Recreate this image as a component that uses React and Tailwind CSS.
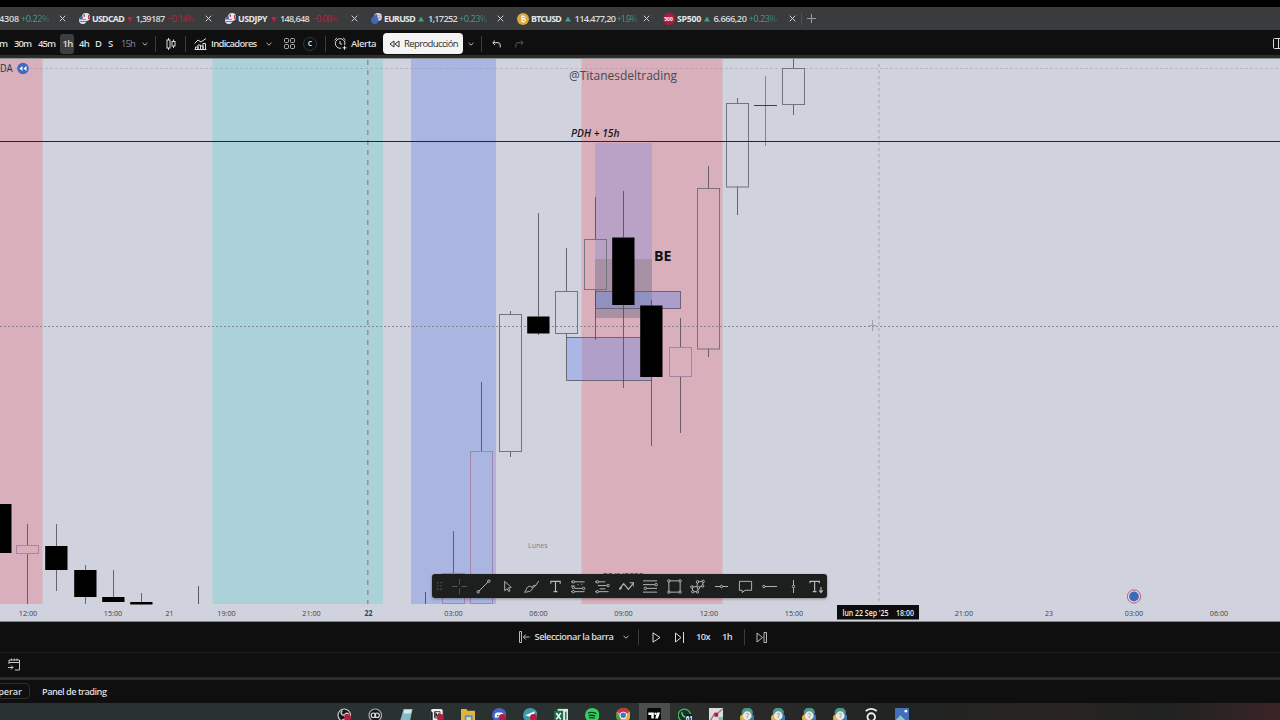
import React, { useLayoutEffect, useRef } from "react";

/* Text that spreads or tightens its letters to fill the width of its box. */
function Fit({ className = "", children }) {
  const box = useRef(null);
  const ink = useRef(null);
  useLayoutEffect(() => {
    const s = ink.current;
    s.style.letterSpacing = "0px";
    const natural = s.getBoundingClientRect().width;
    const wanted = box.current.getBoundingClientRect().width;
    s.style.letterSpacing = `${(wanted - natural) / String(children).length}px`;
  }, [children]);
  return (
    <span ref={box} className={`block shrink-0 whitespace-nowrap ${className}`}>
      <span ref={ink}>{children}</span>
    </span>
  );
}

const Svg = ({ className, box, children, sw = 1 }) => (
  <svg className={`block shrink-0 ${className}`} viewBox={box} fill="none" stroke="currentColor" strokeWidth={sw}>
    {children}
  </svg>
);

const Chevron = ({ className }) => (
  <Svg className={`h-[4px] w-[6px] ${className}`} box="0 0 6 4"><path d="M.5 .8 3 3.2 5.500 .8" /></Svg>
);
const Close = ({ className }) => (
  <Svg className={`h-[7px] w-[7px] text-[#d0d1d3] ${className}`} box="0 0 7 7"><path d="M.7 .7l5.600 5.600M6.300 .7L.7 6.300" /></Svg>
);
const Sep = ({ className }) => <span className={`h-[16px] w-px shrink-0 bg-[#3a3c3d] ${className}`} />;

const UsdPair = () => (
  <Svg className="h-[11px] w-[11px]" box="0 0 11 11" sw="0">
    <circle cx="7" cy="4" r="4" fill="#e8e4ea" />
    <path d="M4.500 1.500h1.500v3H4.500zM9 2h1.500v4H9z" fill="#c43a52" />
    <circle cx="3.800" cy="7.200" r="3.700" fill="#e6e3ee" />
    <path d="M.3 6.500a3.600 3.600 0 0 1 3.500-3v3z" fill="#3e5aa8" />
    <path d="M1 8h6v.9H1zM4 6h3v.8H4z" fill="#d04a60" />
  </Svg>
);
const EurPair = () => (
  <Svg className="h-[11px] w-[11px]" box="0 0 11 11" sw="0">
    <circle cx="7" cy="4" r="4" fill="#dcdbe6" />
    <path d="M3.500 1.500h3v2.500h-3z" fill="#4863b5" />
    <path d="M6.500 4.500h4.300v1H6.500zM7 2.500h3.800v.8H7z" fill="#bd8294" />
    <circle cx="3.800" cy="7.200" r="3.700" fill="#3f68bb" />
  </Svg>
);
const Btc = () => (
  <Svg className="h-[12px] w-[12px]" box="0 0 12 12">
    <circle cx="6" cy="6" r="6" fill="#dba83f" stroke="none" />
    <path d="M4.500 3.300h2.300a1.200 1.200 0 0 1 0 2.500H4.800h2.300a1.400 1.400 0 0 1 0 2.800H4.500M5 3v6M6.200 2.300v1M6.200 8.700v1" stroke="#fff" />
  </Svg>
);
const Sp = () => (
  <span className="flex h-[12px] w-[12px] shrink-0 items-center justify-center rounded-full bg-[#b01a3c] text-[5px] font-bold text-white">500</span>
);
const Tri = ({ down }) => (
  <Svg className="h-[6px] w-[6px]" box="0 0 6 6" sw="0">
    {down ? <path d="M0 1h6L3 6z" fill="#c4213f" /> : <path d="M0 5.500h6L3 .5z" fill="#3aa38b" />}
  </Svg>
);

function Tab({ icon, name, nameW, triM, down, price, priceM, change, changeW, changeM, faded }) {
  return (
    <div className="flex h-full w-[146px] shrink-0 items-center pl-[6.500px]">
      <div className="flex w-[130px] shrink-0 items-center overflow-hidden">
        {icon}
        <Fit className={`ml-[2.500px] text-[8.800px] font-bold text-[#e6e7e9] ${nameW}`}>{name}</Fit>
        <span className={triM}><Tri down={down} /></span>
        <Fit className={`font-semibold text-[#d8d9db] ${priceM}`}>{price}</Fit>
        <span className={`overflow-hidden ${changeM} ${down ? "text-[#d0213f]" : "text-[#42a08c]"} ${faded}`}>
          <Fit className={changeW}>{change}</Fit>
        </span>
      </div>
      <Close className="-ml-[3.500px]" />
    </div>
  );
}

const fade = "[mask-image:linear-gradient(to_right,black_60%,rgba(0,0,0,0.35))]";

function TabBar() {
  return (
    <div className="flex h-[23px] shrink-0 items-center overflow-hidden bg-[#3a3b3c] text-[9.200px] leading-[12px]">
      <div className="flex h-full w-[72px] shrink-0 items-center">
        <Fit className="-ml-[6px] w-[25px] font-semibold text-[#d8d9db]">44308</Fit>
        <Fit className={`ml-[2px] w-[28px] text-[#42a08c] ${fade}`}>+0.22%</Fit>
        <Close className="ml-[10px]" />
      </div>
      <Tab icon={<UsdPair />} name="USDCAD" nameW="w-[32px]" triM="ml-[3px]" down price="1,39187" priceM="ml-[2.500px] w-[29px]" change="−0.14%" changeM="ml-[3px]" changeW="w-[27px]" faded={fade} />
      <Tab icon={<UsdPair />} name="USDJPY" nameW="w-[29px]" triM="ml-[4px]" down price="148,648" priceM="ml-[3px] w-[29px]" change="−0.08%" changeM="ml-[3px]" changeW="w-[27px]" faded={fade} />
      <Tab icon={<EurPair />} name="EURUSD" nameW="w-[31px]" triM="ml-[3px]" price="1,17252" priceM="ml-[4px] w-[29px]" change="+0.23%" changeM="ml-[2px]" changeW="w-[28px]" faded={fade} />
      <Tab icon={<Btc />} name="BTCUSD" nameW="w-[30px]" triM="ml-[3.500px]" price="114.477,20" priceM="ml-[4px] w-[41px]" change="+1.9%" changeM="ml-[1px]" changeW="w-[20px]" faded={fade} />
      <Tab icon={<Sp />} name="SP500" nameW="w-[24px]" triM="ml-[2.500px]" price="6.666,20" priceM="ml-[4px] w-[33px]" change="+0.23%" changeM="ml-[2px]" changeW="w-[28px]" faded={fade} />
      <span className="-ml-px h-[12px] w-px shrink-0 bg-[#505254]" />
      <Svg className="ml-[5px] h-[9px] w-[9px] text-[#9a9c9f]" box="0 0 9 9"><path d="M4.500 0v9M0 4.500h9" /></Svg>
    </div>
  );
}

function MainToolbar() {
  return (
    <div className="flex h-[25px] shrink-0 items-center overflow-hidden bg-[#0f0f0f] pt-[2px] text-[9.500px] font-semibold leading-[14px] text-[#dcdddf]">
      <Fit className="-ml-[10px] w-[17px]">15m</Fit>
      <Fit className="ml-[7px] w-[17px]">30m</Fit>
      <Fit className="ml-[7px] w-[17px]">45m</Fit>
      <span className="ml-[5px] flex h-[20px] w-[14px] shrink-0 items-center rounded-[3px] bg-[#3c3e3f] pl-[2.500px]"><Fit className="w-[10px]">1h</Fit></span>
      <Fit className="ml-[5px] w-[10px]">4h</Fit>
      <Fit className="ml-[6px] w-[7px]">D</Fit>
      <Fit className="ml-[6px] w-[6px]">S</Fit>
      <Fit className="ml-[7px] w-[14px] font-normal text-[#85878a]">15h</Fit>
      <Chevron className="ml-[7px] text-[#b5b7ba]" />
      <Sep className="ml-[7px]" />
      <Svg className="ml-[10px] h-[12px] w-[10px]" box="0 0 10 12">
        <path d="M2.500 0v12M7.500 1.500v8.500" /><rect x="1" y="2" width="3" height="8" fill="#0f0f0f" /><rect x="6" y="3.500" width="3" height="4.500" fill="#0f0f0f" />
      </Svg>
      <Sep className="ml-[9px]" />
      <Svg className="ml-[8px] h-[12px] w-[13px]" box="0 0 13 12">
        <path d="M.5 5.500 4 2l3 2L12 .5M1.500 11.500V9h2.500v2.500M4 11.500V7h2.500v4.500M6.500 11.500V8H9v3.500M9 11.500V5.500h2.500v6M.5 11.500h12" />
      </Svg>
      <Fit className="ml-[4px] w-[45.500px]">Indicadores</Fit>
      <Chevron className="ml-[9.500px] text-[#b5b7ba]" />
      <Svg className="ml-[12px] h-[11px] w-[11px] text-[#b5b7ba]" box="0 0 11 11">
        <rect x=".5" y=".5" width="4" height="4" rx="1" /><rect x="6.500" y=".5" width="4" height="4" rx="1" /><rect x=".5" y="6.500" width="4" height="4" rx="1" /><rect x="6.500" y="6.500" width="4" height="4" rx="1" />
      </Svg>
      <span className="ml-[8px] flex h-[14px] w-[14px] shrink-0 items-center justify-center rounded-full border border-[#343637] text-[7px] font-bold">C</span>
      <Sep className="ml-[8px]" />
      <Svg className="ml-[8px] h-[13px] w-[13px]" box="0 0 13 13">
        <path d="M10.700 8A4.800 4.800 0 1 0 7 11.200M6 4v3h2.200M.6 3.200 3 .8M9.200 .8l2.400 2.400M10.500 8.800v4M8.500 10.800h4" />
      </Svg>
      <Fit className="ml-[4px] w-[25px]">Alerta</Fit>
      <span className="ml-[7px] flex h-[21px] w-[80px] shrink-0 items-center rounded-[4px] bg-[#f4f4f5] font-normal text-[#2c2e31]">
        <Svg className="ml-[5.500px] h-[8px] w-[11px]" box="0 0 11 8"><path d="M5 1v6L1 4zM10 1v6L6 4z" /></Svg>
        <Fit className="ml-[4.500px] w-[54px]">Reproducción</Fit>
      </span>
      <Chevron className="ml-[5px] text-[#b5b7ba]" />
      <Sep className="ml-[7px]" />
      <Svg className="ml-[9.500px] h-[8px] w-[9px]" box="0 0 9 8"><path d="M3 .5 .8 2.700 3 5M1 2.700h5A2.200 2.200 0 0 1 8.200 5v2.500" /></Svg>
      <Svg className="ml-[14.500px] h-[8px] w-[9px] text-[#55585b]" box="0 0 9 8"><path d="M6 .5l2.200 2.200L6 5M8 2.700H3A2.200 2.200 0 0 0 .8 5v2.500" /></Svg>
      <Svg className="ml-auto h-[11px] w-[7px]" box="0 0 7 11"><rect x=".5" y=".5" width="12" height="10" rx="1" /><path d="M5.500 0v11" /></Svg>
    </div>
  );
}

/* x centre, high, body top, body bottom, low, solid */
const candles = [
  [0, 504, 504, 553, 553, 1],
  [27, 524, 545, 553, 604, 0],
  [56, 524, 546, 570, 591, 1],
  [85, 565, 570, 597, 604, 1],
  [113, 570, 597, 602, 602, 1],
  [141, 593, 602, 604.500, 604, 1],
  [453, 531, 573, 603, 604, 0],
  [481, 382, 451, 603, 604, 0],
  [510, 311, 314, 451, 457, 0],
  [538, 213, 316.500, 333.500, 335, 1],
  [566, 248, 291, 333, 338, 0],
  [595, 197, 239, 289, 340, 0],
  [623, 191, 237.500, 305, 388, 1],
  [651, 300, 305.500, 377, 446, 1],
  [680, 318, 347, 376, 433, 0],
  [708, 166, 188, 348.500, 357, 0],
  [737, 98, 103, 186.500, 215, 0],
  [793, 59, 68, 104, 115, 0],
];

/* candles that pink or blue bands tint */
const tinted = [27, 453, 481, 680];

function Candle({ c }) {
  const [x, hi, top, bot, low, solid] = c;
  return (
    <g>
      <path d={`M${x + 0.5} ${hi}V${top}M${x + 0.5} ${bot}V${low}`} stroke="#4a4a54" strokeOpacity=".8" />
      {solid ? (
        <rect x={x - 10.800} y={top} width="22.300" height={bot - top} fill="#000" />
      ) : (
        <rect x={x - 10.500} y={top + 0.5} width="22" height={bot - top} fill="none" stroke={tinted.includes(x) ? "#a585a2" : "#75737e"} />
      )}
    </g>
  );
}

const hours = [
  [28, "12:00"], [113, "15:00"], [169.500, "21"], [226.500, "19:00"], [311.500, "21:00"], [368.500, "22"], [453.500, "03:00"], [538.500, "06:00"],
  [623.500, "09:00"], [708.900, "12:00"], [794, "15:00"], [963.900, "21:00"], [1048.900, "23"], [1134, "03:00"], [1219, "06:00"],
];

function Chart() {
  return (
    <svg className="block h-[563px] w-[1280px]" viewBox="0 59 1280 563">
      <rect x="0" y="59" width="1280" height="563" fill="#d0d3dd" />
      <rect x="0" y="59" width="42.500" height="545" fill="#d9afbb" />
      <rect x="212.500" y="59" width="170.500" height="545" fill="#aad2d8" />
      <rect x="411" y="59" width="85" height="545" fill="#aab6e1" />
      <rect x="581.500" y="59" width="141" height="545" fill="#d9afbb" />
      <path d="M0 68.500H1280" stroke="#9a9ba5" strokeOpacity=".5" strokeDasharray="3 2" />
      <rect x="595" y="143" width="57" height="116" fill="#b9a2c6" />
      <rect x="595" y="259" width="57" height="59" fill="#a890a5" />
      <rect x="595.500" y="291.500" width="85" height="17" fill="#ac9dcc" stroke="#6b6478" />
      <path d="M596 292h56v16h-56z" fill="#8f92bf" />
      <rect x="567" y="337.500" width="15" height="43" fill="#aab6e4" />
      <rect x="582" y="337.500" width="70" height="43" fill="#b09fc9" />
      <path d="M652 337.500H566.500V380.500H652" fill="none" stroke="#6a6877" />
      <path d="M367.800 60V604" stroke="#97838b" strokeWidth="1.300" strokeDasharray="5 5" />
      <path d="M0 326.500H1280" stroke="#777985" strokeDasharray="2 2" strokeOpacity=".8" />
      <path d="M879 64V604" stroke="#858791" strokeDasharray="3 3" strokeOpacity=".6" />
      <path d="M869 325.500h7M872.500 320v11" stroke="#a0a2ab" />
      <path d="M198.500 586V604M425.500 592V604M442.500 598V604M464.500 598V604" stroke="#56565f" />
      {candles.map((c, i) => <Candle key={i} c={c} />)}
      <path d="M765.500 76V146" stroke="#85858f" />
      <path d="M754 105.500H777" stroke="#3e3e46" />
      <path d="M0 141.500H1280" stroke="#24242a" strokeWidth="1.100" />
      <g fontFamily="'Open Sans','Noto Sans',sans-serif">
        <text x="569" y="79.500" fontSize="12.500" fill="#474950" textLength="108" lengthAdjust="spacingAndGlyphs">@Titanesdeltrading</text>
        <text x="571" y="137" fontSize="10" fontWeight="600" fontStyle="italic" fill="#17171a" textLength="48.500" lengthAdjust="spacingAndGlyphs">PDH + 15h</text>
        <text x="654" y="261" fontSize="14.500" fontWeight="700" fill="#101013" textLength="17.500" lengthAdjust="spacingAndGlyphs">BE</text>
        <text x="528" y="548" fontSize="8" fill="#7d7f88" textLength="19.500" lengthAdjust="spacingAndGlyphs">Lunes</text>
        <text x="603" y="578" fontSize="8" fill="#2b2b30" textLength="41" lengthAdjust="spacingAndGlyphs">22/9/2025</text>
        {hours.map(([x, t], i) => (
          <text key={i} x={x} y="616" fontSize="8" fontWeight={x === 368.500 ? 700 : 400} fill="#3f4148" textAnchor="middle" textLength={t.length > 2 ? 18.500 : 8} lengthAdjust="spacingAndGlyphs">{t}</text>
        ))}
        <text x="0" y="72" fontSize="10" fill="#2d2f35" textLength="12.500" lengthAdjust="spacingAndGlyphs">DA</text>
        <rect x="837" y="605" width="82" height="14.500" fill="#0d0d0e" />
        <text x="842.500" y="616" fontSize="8" fontWeight="600" fill="#eeeef0" textLength="46" lengthAdjust="spacingAndGlyphs">lun 22 Sep '25</text>
        <text x="896" y="616" fontSize="8" fontWeight="600" fill="#eeeef0" textLength="18" lengthAdjust="spacingAndGlyphs">18:00</text>
      </g>
      <circle cx="23" cy="68.500" r="5.800" fill="#4069c4" />
      <path d="M22.500 66v5l-3-2.500zM26.500 66v5l-3-2.500z" fill="#fff" />
      <circle cx="1134" cy="596.500" r="6.600" fill="#e3dfe8" stroke="#b9586f" />
      <circle cx="1134" cy="596.500" r="4.900" fill="#3c6cb8" />
    </svg>
  );
}

const N = ({ x, y }) => <circle cx={x} cy={y} r="1.300" fill="#1d1f1f" />;
const tools = [
  <path d="M8 0v6M8 10v6M0 8h6M10 8h6" stroke="#55585a" />,
  <><path d="M3 13 13 3" /><N x="2.300" y="13.700" /><N x="13.700" y="2.300" /></>,
  <path d="M5 2.500l7 6.500-3 .5 1.700 3-1.500 .8-1.600-3L5 12.500z" />,
  <path d="M.5 14c2-1 1.500-4 3.500-5.500S9 8 9 10s-3 4-8.500 4zM9 8l2-1.500 1 1 3.800-5.500M9 9.500l3-2" />,
  <path d="M3 5V2.500h10V5M8 2.500v11M6 13.500h4" strokeWidth="1.200" />,
  <><path d="M0 3h14.500M0 7.500h4M7 6h1M11 5.500h1M0 13.500h14.500M4 10h8" /><N x="2.500" y="3" /><N x="2.500" y="13.500" /><N x="13.500" y="10" /><N x="2.500" y="9" /></>,
  <><path d="M0 3h11M3 7h12M0 13.500h14.500M5 10.500h6" /><N x="2.500" y="3" /><N x="14" y="7" /><N x="2.500" y="13.500" /></>,
  <path d="M0 11 5 5l5 6 5.500-6.500M11.500 4h4.500v4.500M1 11l2-2" strokeWidth="1.200" />,
  <><path d="M0 2h15M0 6h13M2 10h13M0 14h15" /><N x="14" y="6" /><N x="2.500" y="10" /></>,
  <><rect x="2" y="2" width="12" height="12" /><N x="2" y="2" /><N x="14" y="2" /><N x="2" y="14" /><N x="14" y="14" /></>,
  <><path d="M2.500 8.500 7.500 8 8 3 14 2.500 13.500 7 9 9 8 13.500H3z" /><N x="2" y="8.500" /><N x="8" y="3" /><N x="14" y="2.500" /><N x="13.500" y="7.500" /><N x="9" y="9.500" /><N x="8" y="13.800" /><N x="3" y="13.500" /></>,
  <><path d="M1 8h14" /><N x="8" y="8" /></>,
  <path d="M1.500 2.500h13v9.500H7.500L4.500 14.500V12h-3z" />,
  <><path d="M3 8h13" /><N x="2" y="8" /></>,
  <><path d="M8 1v14" /><N x="8" y="8" /></>,
  <path d="M1 4.500V2.500h10v2M6 2.500v11M4 13.500h4M12.800 8.500v5.500M10.800 12l2 2.500 2-2.500" strokeWidth="1.200" />,
];

function DrawingBar() {
  return (
    <div className="absolute left-[432px] top-[515px] flex h-[24px] w-[395px] items-center rounded-[3px] bg-[#1d1f1f] text-[#b9bbbd] shadow-[0_1px_3px_rgba(0,0,0,0.35)]">
      <Svg className="ml-[5px] h-[8px] w-[5px] text-[#55585a]" box="0 0 5 8" sw="0">
        <path d="M0 0h1.300v1.300H0zM3.500 0h1.300v1.300H3.500zM0 3.300h1.300v1.300H0zM3.500 3.300h1.300v1.300H3.500zM0 6.600h1.300v1.300H0zM3.500 6.600h1.300v1.300H3.500z" fill="currentColor" />
      </Svg>
      <div className="ml-[6px] flex">
        {tools.map((t, i) => (
          <span key={i} className="flex w-[23.800px] justify-center"><Svg className="h-[15px] w-[15px]" box="0 0 16 16">{t}</Svg></span>
        ))}
      </div>
    </div>
  );
}

function ReplayBar() {
  return (
    <div className="flex h-[30px] shrink-0 items-center bg-[#0f0f0f] text-[9.300px] font-semibold leading-[14px] text-[#dcdddf]">
      <Svg className="ml-[519px] h-[12px] w-[11px] text-[#b9bbbd]" box="0 0 11 12"><path d="M.5 .5h2v11h-2zM10.500 6H4.500M6.800 3.500 4.300 6l2.500 2.500" /></Svg>
      <Fit className="ml-[4.500px] w-[79px]">Seleccionar la barra</Fit>
      <Chevron className="ml-[9px] text-[#b5b7ba]" />
      <Sep className="ml-[9px]" />
      <Svg className="ml-[13px] h-[11px] w-[9px]" box="0 0 9 11"><path d="M1 .8v9.400L8 5.500z" /></Svg>
      <Svg className="ml-[13.500px] h-[11px] w-[11px]" box="0 0 11 11"><path d="M1.500 1v9L7 5.500zM9.500 0v11" /></Svg>
      <Fit className="ml-[11px] w-[14px]">10x</Fit>
      <Fit className="ml-[12px] w-[10px]">1h</Fit>
      <Sep className="ml-[12px]" />
      <Svg className="ml-[11px] h-[11px] w-[11px] text-[#b9bbbd]" box="0 0 11 11"><path d="M1 1v9l5.500-4.500zM8 .5h2.500v10H8z" /></Svg>
    </div>
  );
}

const Dot = () => <circle cx="11.500" cy="10.500" r="3.800" fill="#b41f3f" />;
const Cloud = () => (
  <>
    <path d="M3 8a5 5 0 0 1 5-8 5 5 0 0 1 5 8z" fill="#4f9488" /><circle cx="4" cy="11" r="4" fill="#e0b443" /><circle cx="12" cy="11" r="4" fill="#3f77b5" />
    <circle cx="8" cy="8.500" r="4.800" fill="#e9e9e6" /><path d="M6.500 7c1-2 3.500-1 3 .5L8 9v2" fill="none" stroke="#8d8f8f" />
  </>
);
const apps = [
  <><circle cx="8" cy="8" r="6.900" fill="#17191a" stroke="#c9cbcc" strokeWidth="1.300" /><path d="M8 8C4 8 4 4 6 3M8 8c2-4 5-2 5 0M8 8c2 4-1 6-3 5" fill="none" stroke="#c9cbcc" strokeWidth="1.600" /><Dot /></>,
  <><circle cx="8" cy="8" r="6.900" fill="#17191a" stroke="#a9abac" strokeWidth="1.300" /><rect x="3.500" y="5.500" width="5" height="5" rx="2.500" fill="none" stroke="#ddd" strokeWidth="1.300" /><rect x="7.500" y="5.500" width="5" height="5" rx="2.500" fill="none" stroke="#ddd" strokeWidth="1.300" /></>,
  <><path d="M5 1h10l-3 14H1z" fill="#83bcc2" /><path d="M6 2h8l-1 4H5z" fill="#d4e7e8" /></>,
  <><rect x="1" y="1" width="13" height="14" rx="2" fill="#f0f0f0" /><path d="M1 3l2 2v11H1z" fill="#222" /><path d="M5 4h6v7H5z" fill="none" stroke="#333" strokeWidth="1" /><path d="M6.500 10V6l3 4V6" fill="none" stroke="#111" strokeWidth="1.300" /><Dot /></>,
  <><path d="M0 1h6l1 2h9v13H0z" fill="#e2b33f" /><path d="M4 8h9v8H4z" fill="#4d9bc2" /><path d="M6 10h5v6H6z" fill="#e9d796" /></>,
  <><circle cx="8" cy="8" r="8" fill="#4963c4" /><path d="M3 10c0-5 2-5 5-5s5 0 5 5c-2 2-3 0-5 0s-3 2-5 0z" fill="#fff" /><circle cx="6.300" cy="8.500" r="1" fill="#4963c4" /><circle cx="9.700" cy="8.500" r="1" fill="#4963c4" /><Dot /></>,
  <><circle cx="8" cy="8" r="8" fill="#3e9aab" /><path d="M2.500 8 13 3.500 11 12 7 9.500z" fill="#fff" /><Dot /></>,
  <><rect x="4" y="1" width="12" height="15" fill="#d9e8e1" /><rect x="0" y="3" width="10" height="12" fill="#1d6f4a" /><path d="M2.500 5.500l5 7M7.500 5.500l-5 7" stroke="#fff" strokeWidth="1.600" /><path d="M13 4v9" stroke="#2c6a50" strokeWidth="1.500" /></>,
  <><circle cx="8" cy="8" r="8" fill="#35cf62" /><path d="M3.500 5.500c3-1 6-.8 9 .7M4 8.500c3-.9 5-.6 7.500 .6M4.500 11c2-.6 4-.4 6 .5" fill="none" stroke="#153a20" strokeWidth="1.500" /></>,
  <><circle cx="8" cy="8" r="8" fill="#d9b13c" /><path d="M1 4a8 8 0 0 1 14 0L8 8z" fill="#c8334a" /><path d="M1 4l6 12A8 8 0 0 1 1 4z" fill="#3f9c58" /><circle cx="8" cy="8" r="4" fill="#fff" /><circle cx="8" cy="8" r="3" fill="#3f74cf" /></>,
  <><rect x="0" y="0" width="16" height="16" rx="2" fill="#080808" /><path d="M1.500 5h6v6.500H4.800V7.700H1.500zM11 5h3.500L12 11.500H9z" fill="#fff" /><circle cx="9.300" cy="6.300" r="1.300" fill="#fff" /></>,
  <><circle cx="7" cy="8" r="6.800" fill="#1f3027" stroke="#3bbd68" strokeWidth="1.500" /><path d="M4.500 4.500c-1 3 2 6 5 5.500" stroke="#6fd092" strokeWidth="1.500" fill="none" /><circle cx="12.500" cy="11" r="4.500" fill="#17191a" /><text x="8.500" y="14" fontSize="7" fontWeight="700" fill="#fff" fontFamily="'Open Sans',sans-serif">61</text></>,
  <><rect x="0" y="0" width="16" height="16" fill="#d7dfdf" /><path d="M0 16 7 5M15 1 7 8" stroke="#a8707f" strokeWidth="1.500" /><circle cx="8" cy="7.500" r="2.400" fill="#b5203e" /><path d="M10 10h6v6h-4z" fill="#7fbdb5" /></>,
  <Cloud />, <Cloud />, <Cloud />, <Cloud />,
  <><circle cx="8" cy="10" r="4.200" fill="none" stroke="#f2f2f2" strokeWidth="2" /><path d="M2 3.500c3-3.300 9-3.300 12 0" fill="none" stroke="#f2f2f2" strokeWidth="2" /></>,
  <><rect x="0" y="0" width="16" height="16" rx="1" fill="#446fb8" /><path d="M0 14l6-6 8 8H0z" fill="#8cc7c4" /><circle cx="12" cy="3.500" r="1.500" fill="#fff" /></>,
];

function Taskbar() {
  return (
    <div className="flex h-[17px] shrink-0 items-start overflow-hidden bg-[linear-gradient(to_right,#2a3231_0,#2a3231_620px,#2c2c2a_720px,#202423_900px,#292422_1060px,#1f2221_1160px,#3a2426_1280px)] pl-[328.500px]">
      {apps.map((a, i) => (
        <span key={i} className={`flex h-full w-[31px] shrink-0 justify-center overflow-hidden pt-[5px] ${i === 10 ? "bg-[#4a4e4e]" : ""}`}>
          <svg className="block h-[14.500px] w-[14.500px] shrink-0" viewBox="0 0 16 16">{a}</svg>
        </span>
      ))}
    </div>
  );
}

export default function App() {
  return (
    <div className="flex h-[720px] w-[1280px] flex-col overflow-hidden bg-[#0f0f0f] font-['Open_Sans','Noto_Sans',sans-serif]">
      <div className="h-[7px] shrink-0 bg-black" />
      <TabBar />
      <MainToolbar />
      <div className="h-[4px] shrink-0 border-b border-[#8d9191] bg-[#2a2e2e]" />
      <main className="relative h-[562px] shrink-0 overflow-hidden">
        <Chart />
        <DrawingBar />
      </main>
      <div className="h-px shrink-0 bg-[#7f8b8c]" />
      <ReplayBar />
      <div className="flex h-[25px] shrink-0 items-center border-t border-[#202122] pb-[2px] pl-[8px] text-[#c4c6c8]">
        <Svg className="h-[13px] w-[13px]" box="0 0 13 13"><path d="M1 6V2h10.500v10H7M1 4.500h10.500M3.500 .5v2M6.300 .5v2M9 .5v2M0 9.500h5M3 7.500l2 2-2 2" /></Svg>
      </div>
      <div className="h-[3px] shrink-0 bg-[#292d2d]" />
      <div className="flex h-[23px] shrink-0 items-center pb-px text-[9.200px] font-semibold leading-[13px] text-[#dcdddf]">
        <span className="-ml-[12px] flex h-[16px] w-[42px] shrink-0 items-center rounded-[4px] border border-[#2c2e2f] pl-[2px]"><Fit className="w-[31px]">Operar</Fit></span>
        <Fit className="ml-[12px] w-[64.500px]">Panel de trading</Fit>
      </div>
      <Taskbar />
    </div>
  );
}
